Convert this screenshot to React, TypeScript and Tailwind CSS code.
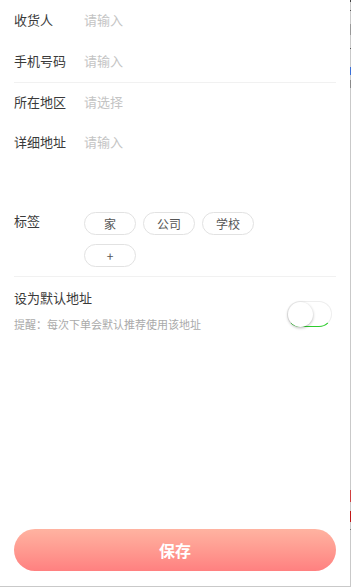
import React from "react";

const font = {
  fontFamily: '"Noto Sans CJK SC", "Noto Sans", sans-serif',
};

interface FieldProps {
  label: string;
  placeholder: string;
  h: string;
}

function Field({ label, placeholder, h }: FieldProps) {
  return (
    <div className={`flex items-center px-[14px] ${h}`}>
      <div className="w-[70px] text-[13px] text-[#3a3a3a]">{label}</div>
      <div className="text-[13px] text-[#c4c4c4]">{placeholder}</div>
    </div>
  );
}

function Tag({ text }: { text: string }) {
  return (
    <div className="flex h-[23px] w-[52px] items-center justify-center rounded-full border border-[#e2e2e2] text-[12px] text-[#555]">
      {text}
    </div>
  );
}

function EdgeStrip() {
  return (
    <div className="flex w-px flex-col bg-[#c9c9c9]">
      <div className="h-[2px] bg-[#444]" />
      <div className="h-[8px]" />
      <div className="h-[1px] bg-[#555]" />
      <div className="h-[13px]" />
      <div className="h-[11px] bg-[#999]" />
      <div className="h-[13px]" />
      <div className="h-[1px] bg-[#555]" />
      <div className="h-[18px]" />
      <div className="h-[8px] bg-[#3a6fd8]" />
      <div className="h-[5px]" />
      <div className="h-[8px] bg-[#8a8a8a]" />
      <div className="h-[402px]" />
      <div className="h-[12px] bg-[#d04040]" />
      <div className="h-[9px]" />
      <div className="h-[11px] bg-[#c01818]" />
      <div className="h-[7px]" />
      <div className="h-[1px] bg-[#777]" />
      <div className="flex-1" />
    </div>
  );
}

export default function App() {
  return (
    <div className="flex h-[587px] w-[351px] flex-col bg-white" style={font}>
      <div className="flex flex-1">
        <div className="flex flex-1 flex-col">
          <Field label="收货人" placeholder="请输入" h="h-[40px]" />
          <Field label="手机号码" placeholder="请输入" h="h-[42px]" />
          <div className="mx-[14px] h-px bg-[#f1f1f1]" />
          <Field label="所在地区" placeholder="请选择" h="h-[38px]" />
          <Field label="详细地址" placeholder="请输入" h="h-[42px]" />

          <div className="flex px-[14px] pt-[49px]">
            <div className="w-[70px] text-[13px] leading-[18px] text-[#3a3a3a]">标签</div>
            <div className="flex w-[180px] flex-wrap gap-x-[7px] gap-y-[9px]">
              <Tag text="家" />
              <Tag text="公司" />
              <Tag text="学校" />
              <Tag text="+" />
            </div>
          </div>

          <div className="mx-[14px] mt-[9px] h-px bg-[#f1f1f1]" />

          <div className="flex items-center justify-between px-[14px] pt-[11px]">
            <div>
              <div className="text-[13px] text-[#3a3a3a]">设为默认地址</div>
              <div className="mt-[8px] text-[11px] text-[#aaa]">
                提醒：每次下单会默认推荐使用该地址
              </div>
            </div>
            <div className="mr-[4px] mt-[8px] flex h-[26px] w-[45px] items-center rounded-full border border-[#eee] border-b-[1.5px] border-b-[#2ecc2e]">
              <div className="h-[25px] w-[25px] rounded-full bg-white shadow-[0_1px_3px_rgba(0,0,0,0.3)]" />
            </div>
          </div>

          <div className="flex-1" />

          <div className="px-[14px] pb-[15px]">
            <button className="flex h-[42px] w-full items-center justify-center rounded-full bg-gradient-to-b from-[#ffb3a1] to-[#ff8080] text-[16px] font-bold text-white">
              保存
            </button>
          </div>
        </div>
        <EdgeStrip />
      </div>
      <div className="h-px bg-[#c9c9c9]" />
    </div>
  );
}
